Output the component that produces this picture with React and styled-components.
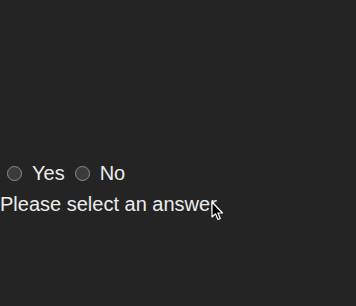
import React, {useState} from 'react';
import styled, {createGlobalStyle} from 'styled-components';

const Global = createGlobalStyle`
  html, body {
    margin: 0;
    padding: 0;
    background: #242424;
  }
  body {
    font-family: "Liberation Sans", Arial, sans-serif;
    color: #ececec;
    font-size: 20px;
    line-height: 1.5;
  }
`;

const Page = styled.div`
  position: relative;
  width: 356px;
  height: 306px;
  padding-top: 157px;
  box-sizing: border-box;
  overflow: hidden;
`;

const Row = styled.div`
  display: flex;
  align-items: center;
  height: 32px;
`;

const Option = styled.label`
  display: flex;
  align-items: center;
  margin-right: 10px;
`;

const Radio = styled.input.attrs({type: 'radio'})`
  appearance: none;
  -webkit-appearance: none;
  flex: none;
  width: 15px;
  height: 15px;
  margin: 0 10px 0 ${(p) => (p.$first ? '7px' : '0')};
  padding: 0;
  border-radius: 50%;
  border: 1.5px solid #8c8c8c;
  background: #3b3b3b;
  box-sizing: border-box;

  &:checked {
    background: #8ab4f8;
  }
`;

const Hint = styled.div`
  height: 31px;
`;

const Cursor = styled.svg`
  position: absolute;
  left: 211px;
  top: 201px;
`;

export default function App() {
  const [answer, setAnswer] = useState(null);
  return (
    <>
      <Global />
      <Page>
        <Row>
          <Option>
            <Radio $first name="answer" checked={answer === 'yes'} onChange={() => setAnswer('yes')} />
            Yes
          </Option>
          <Option>
            <Radio name="answer" checked={answer === 'no'} onChange={() => setAnswer('no')} />
            No
          </Option>
        </Row>
        {!answer && <Hint>Please select an answer</Hint>}
        <Cursor width="13" height="20" viewBox="0 0 13 20">
          <path
            d="M1 1 L1 16 L4.5 12.8 L7 18.5 L9.3 17.5 L6.9 12 L11.5 12 Z"
            fill="#000"
            stroke="#fff"
            strokeWidth="1.2"
            strokeLinejoin="round"
          />
        </Cursor>
      </Page>
    </>
  );
}
